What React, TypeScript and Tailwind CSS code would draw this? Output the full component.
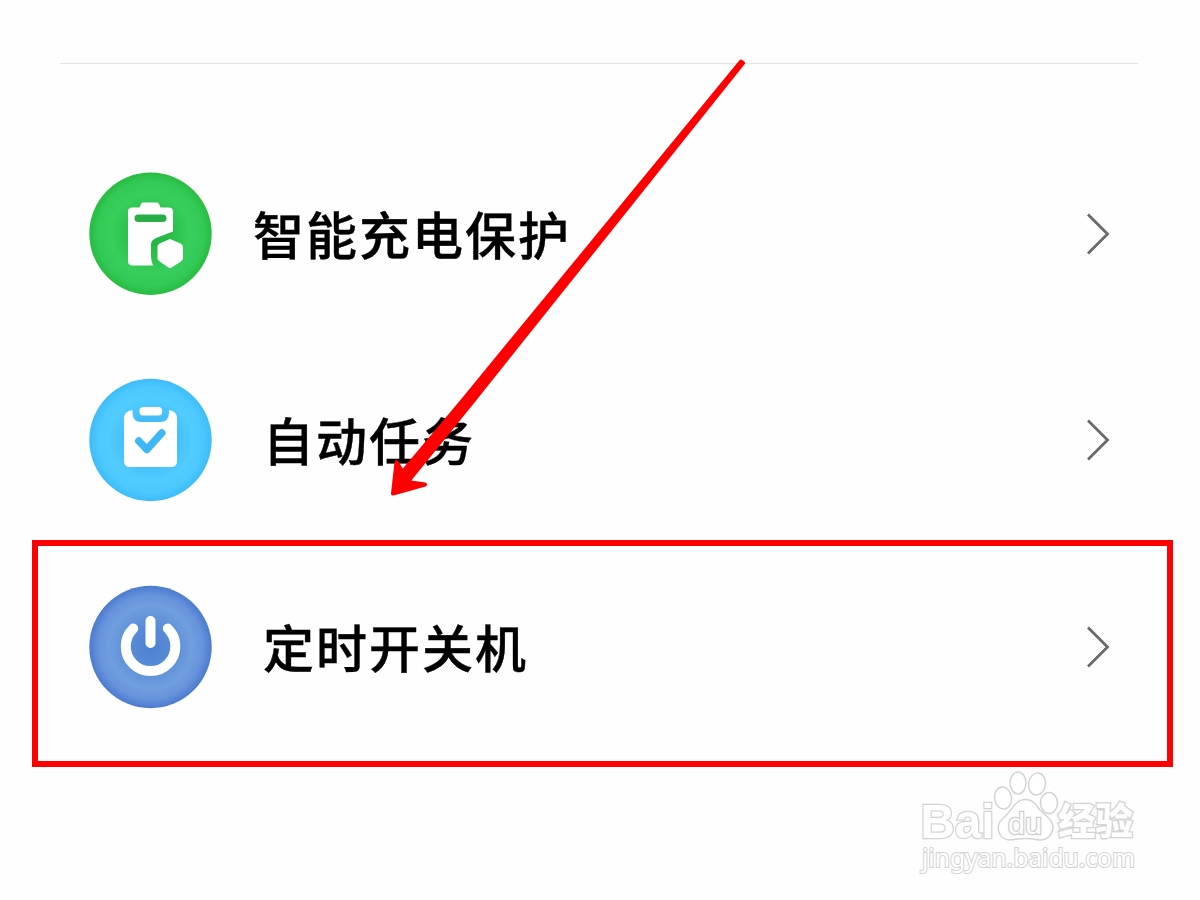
import type { ReactNode } from 'react';

type RowProps = {
    icon: ReactNode;
    label: string;
    className?: string;
    labelClassName?: string;
};

function BatteryIcon() {
    return (
        <svg viewBox="0 0 122 122" className="w-[122px] h-[122px] shrink-0 overflow-visible">
            <defs>
                <radialGradient id="green">
                    <stop offset="0" stopColor="#22b03f" />
                    <stop offset="0.3" stopColor="#28bd47" />
                    <stop offset="0.65" stopColor="#37ce5b" />
                    <stop offset="0.85" stopColor="#34ca57" />
                    <stop offset="1" stopColor="#27bd41" />
                </radialGradient>
            </defs>
            <circle cx="60.500" cy="60.700" r="61.200" fill="url(#green)" />
            <path
                d="M42.500 34.500h7l1.500-3.500q.5-1.500 2-1.500h14q1.500 0 2 1.500l1.500 3.500H78.500q4.500 0 4.500 4v20l-14.500 5.500q-7.500 2.500-7.500 7V83q0 5 2 9.500H42.500q-4.500 0-4.500-4v-50q0-4 4.500-4z"
                fill="#fff"
            />
            <rect x="44.500" y="41.500" width="32" height="7.500" rx="3.750" fill="#29ae45" />
            <path
                d="M80 66.500l10.500 4.500q2 1 2 2.700V85q0 2-1.500 3l-9.500 6q-1.500 1-3 0l-9-6q-1.500-1-1.500-3V73.700q0-2 1.500-2.700z"
                fill="#fff"
                stroke="#fff"
                strokeLinejoin="round"
            />
        </svg>
    );
}

function TaskIcon() {
    return (
        <svg viewBox="0 0 122 122" className="w-[122px] h-[122px] shrink-0 overflow-visible">
            <defs>
                <radialGradient id="sky">
                    <stop offset="0" stopColor="#3eb4f5" />
                    <stop offset="0.35" stopColor="#42bbf9" />
                    <stop offset="0.68" stopColor="#51ccff" />
                    <stop offset="0.85" stopColor="#4dc9ff" />
                    <stop offset="1" stopColor="#3dbcf9" />
                </radialGradient>
            </defs>
            <circle cx="60.500" cy="61" r="61.200" fill="url(#sky)" />
            <path
                d="M42.500 31v2.500q0 9.500 9 9.500h18.500q9 0 9-9.500V31q8 1.500 8 8v43q0 6-6 6H40q-6 0-6-6V39q0-6.500 8.500-8z"
                fill="#fff"
            />
            <rect x="49.500" y="28" width="22.500" height="8.500" rx="3.500" fill="#fff" />
            <path
                d="M48.800 62l8 8.500 15-16.500"
                fill="none"
                stroke="#3fb6f6"
                strokeWidth="7.500"
                strokeLinecap="round"
                strokeLinejoin="round"
            />
        </svg>
    );
}

function PowerIcon() {
    return (
        <svg viewBox="0 0 122 122" className="w-[122px] h-[122px] shrink-0 overflow-visible">
            <defs>
                <radialGradient id="indigo">
                    <stop offset="0" stopColor="#4d82d2" />
                    <stop offset="0.35" stopColor="#588cd7" />
                    <stop offset="0.68" stopColor="#709ede" />
                    <stop offset="0.85" stopColor="#6793dc" />
                    <stop offset="1" stopColor="#4c7bcf" />
                </radialGradient>
            </defs>
            <circle cx="60.500" cy="61" r="61.200" fill="url(#indigo)" />
            <path
                d="M43.300 42.500a24.800 24.800 0 1 0 34.500 0M60.500 35v22"
                fill="none"
                stroke="#fff"
                strokeWidth="10"
                strokeLinecap="round"
            />
        </svg>
    );
}

function Row({ icon, label, className = '', labelClassName = '' }: RowProps) {
    return (
        <div className={`flex items-start ${className}`}>
            <div className="flex h-[122px] flex-1 items-center">
                {icon}
                <span
                    className={`pb-[2px] text-[51px] leading-none tracking-[2px] whitespace-nowrap font-medium [-webkit-text-stroke:0.4px_#000] ${labelClassName}`}
                >
                    {label}
                </span>
                <svg viewBox="0 0 24 42" className="ml-auto w-6 h-[42px]" fill="none">
                    <path d="M2 1.500l19.500 19.500L2 40.500" stroke="#686b6b" strokeWidth="2.800" />
                </svg>
            </div>
        </div>
    );
}

function Watermark() {
    return (
        <svg
            viewBox="0 0 240 120"
            className="absolute left-[910px] top-[765px] w-[240px] h-[120px]"
            fill="#fff"
            stroke="#d4d4d4"
            strokeWidth="1.500"
        >
            <g fontFamily="'Liberation Sans', 'Noto Sans CJK SC', sans-serif" style={{ paintOrder: 'stroke' }} strokeWidth="2.600">
                <text x="10.500" y="73" fontSize="49" fontWeight="700" textLength="74" lengthAdjust="spacingAndGlyphs">
                    Bai
                </text>
                <text x="148" y="70" fontSize="37" fontWeight="900" textLength="75" lengthAdjust="spacingAndGlyphs">
                    经验
                </text>
                <text x="12" y="102" fontSize="25" fontFamily="'Noto Sans', sans-serif" strokeWidth="2.200" textLength="213" lengthAdjust="spacingAndGlyphs">
                    jingyan.baidu.com
                </text>
            </g>
            <ellipse cx="93" cy="33" rx="8.500" ry="11" transform="rotate(-8 93 33)" />
            <ellipse cx="108" cy="18" rx="8" ry="11" />
            <ellipse cx="127" cy="19" rx="8.500" ry="11" transform="rotate(8 127 19)" />
            <ellipse cx="139" cy="38" rx="8.500" ry="10.500" />
            <path d="M115 34.500q8 0 13 8 4 5 9 9 10 9 3 19-5 6-14 4-11-2-22 0-10 2-14-5-5-10 4-17 4-4 8-9 6-9 13-9z" />
            <text x="98" y="69" fontSize="30" fontFamily="'Liberation Sans', sans-serif" strokeWidth="2.600" stroke="#cfcfcf" style={{ paintOrder: 'stroke' }} textLength="34" lengthAdjust="spacingAndGlyphs">
                du
            </text>
        </svg>
    );
}

export default function App() {
    return (
        <div
            className="relative w-[1200px] h-[900px] overflow-hidden bg-[#fefefe] pt-[63px] text-black"
            style={{ fontFamily: "'Noto Sans CJK SC', sans-serif" }}
        >
            <div className="ml-[60px] mr-[62px] h-px bg-[#dfe5f0]" />

            <div className="pt-[109px]">
                <Row
                    icon={<BatteryIcon />}
                    label="智能充电保护"
                    className="h-[206px] pl-[90px] pr-[90px]"
                    labelClassName="ml-[41px]"
                />
                <Row
                    icon={<TaskIcon />}
                    label="自动任务"
                    className="h-[161px] pl-[90px] pr-[90px]"
                    labelClassName="ml-[51px]"
                />
            </div>

            <div className="ml-8 mr-[27px] h-[227px] border-[6px] border-[#ff0000] pt-10">
                <Row
                    icon={<PowerIcon />}
                    label="定时开关机"
                    className="pl-[52px] pr-[57px]"
                    labelClassName="ml-[51px]"
                />
            </div>

            {/* Arrow pointing to the scheduled power item */}
            <svg viewBox="0 0 1200 900" className="pointer-events-none absolute inset-0 w-[1200px] h-[900px]">
                <path
                    d="M741 61.500L463 400 402.500 472 396.500 462 393 493.500 425 484.500 407.500 482 474 400 743 63z"
                    fill="#ff0000"
                    stroke="#ff0000"
                    strokeWidth="4"
                    strokeLinejoin="round"
                />
            </svg>

            <Watermark />
        </div>
    );
}
